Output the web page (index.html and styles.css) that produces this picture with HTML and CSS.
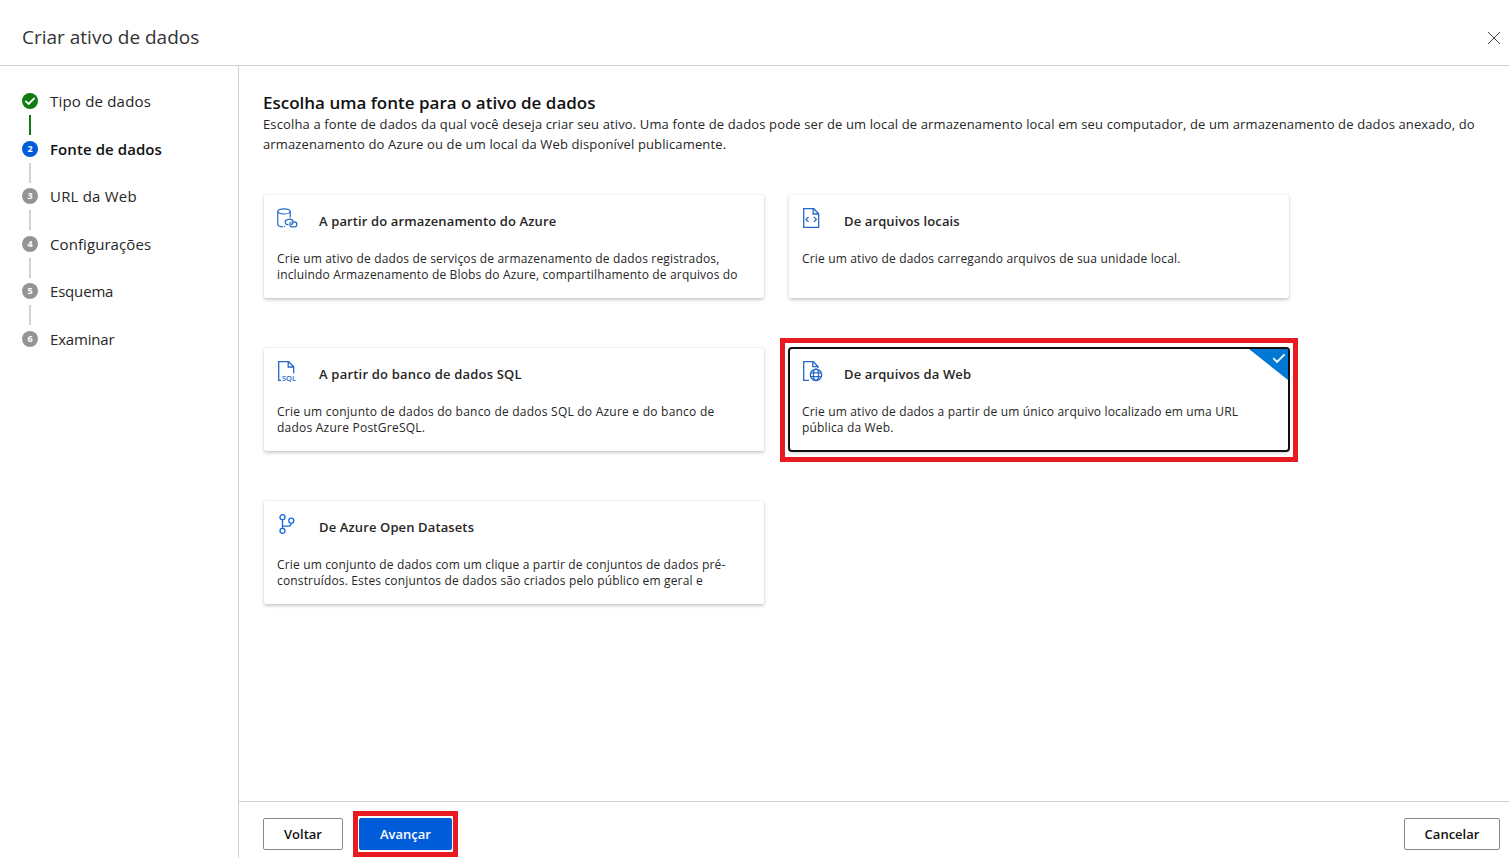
FILE: index.html
```html
<!DOCTYPE html>
<html lang="pt">
<head>
<meta charset="utf-8">
<title>Criar ativo de dados</title>
<link rel="stylesheet" href="styles.css">
</head>
<body>
<div class="app">
  <header class="header">
    <h1 class="title">Criar ativo de dados</h1>
    <button class="close" aria-label="Fechar"><svg width="14" height="14" viewBox="0 0 14 14"><path d="M1 1l12 12M13 1L1 13" stroke="#444" stroke-width="1" fill="none"/></svg></button>
  </header>
  <div class="body">
    <nav class="steps">
      <div class="step done"><span class="dot"><svg width="16" height="16" viewBox="0 0 16 16"><path d="M3.4 7.8l3.2 3.2 6-6" fill="none" stroke="#fff" stroke-width="1.8"/></svg></span><span class="label wide">Tipo de dados</span></div>
      <div class="step current"><span class="dot">2</span><span class="label">Fonte de dados</span></div>
      <div class="step"><span class="dot">3</span><span class="label wide">URL da Web</span></div>
      <div class="step"><span class="dot">4</span><span class="label">Configurações</span></div>
      <div class="step"><span class="dot">5</span><span class="label narrow">Esquema</span></div>
      <div class="step"><span class="dot">6</span><span class="label narrow">Examinar</span></div>
    </nav>
    <main class="main">
      <section class="content">
        <h2 class="heading">Escolha uma fonte para o ativo de dados</h2>
        <p class="intro">Escolha a fonte de dados da qual você deseja criar seu ativo. Uma fonte de dados pode ser de um local de armazenamento local em seu computador, de um armazenamento de dados anexado, do<br>armazenamento do Azure ou de um local da Web disponível publicamente.</p>
        <div class="cards">
          <article class="card">
            <div class="card-head">
              <svg class="icon" width="22" height="22" viewBox="0 0 22 22"><g fill="none" stroke="#2468c8" stroke-width="1.2"><ellipse cx="7" cy="3.4" rx="6.2" ry="2.6"/><path d="M.8 3.4v13.2c0 1.2 2.4 2.2 5.4 2.4M13.2 3.4v6.2M7.2 18.4h1"/><path d="M11.4 16.6h-.6a2.5 2.5 0 0 1-.2-5l2.3-.4c3.8-.2 4.2 4.6 1 5.4"/><path d="M16.4 13.9h1.2c3.2.5 3 4.8-.2 5h-2.4c-3-.5-3-4.4-.4-5.2"/></g></svg>
              <h3>A partir do armazenamento do Azure</h3>
            </div>
            <p>Crie um ativo de dados de serviços de armazenamento de dados registrados,<br>incluindo Armazenamento de Blobs do Azure, compartilhamento de arquivos do</p>
          </article>
          <article class="card">
            <div class="card-head">
              <svg class="icon" width="22" height="22" viewBox="0 0 22 22"><g fill="none" stroke="#2468c8" stroke-width="1.3"><path d="M1.7.7h10l5 5v13.6h-15zM11.2.7v5.3h5.5M6.5 8.9L4 11.4l2.5 2.5M11.9 8.9l2.5 2.5-2.5 2.5"/></g></svg>
              <h3>De arquivos locais</h3>
            </div>
            <p>Crie um ativo de dados carregando arquivos de sua unidade local.</p>
          </article>
          <article class="card loose">
            <div class="card-head">
              <svg class="icon" width="22" height="22" viewBox="0 0 22 22"><path d="M4 19.3H1.7V.7h10l5 5v6.5M11.2.7v5.3h5.5" fill="none" stroke="#2468c8" stroke-width="1.3"/><text x="5" y="19.6" class="sql" textLength="14">SQL</text></svg>
              <h3>A partir do banco de dados SQL</h3>
            </div>
            <p>Crie um conjunto de dados do banco de dados SQL do Azure e do banco de<br>dados Azure PostGreSQL.</p>
          </article>
          <article class="card selected">
            <div class="card-head">
              <svg class="icon" width="22" height="22" viewBox="0 0 22 22"><g fill="none" stroke="#2468c8" stroke-width="1.3"><path d="M7 19.3H1.7V.7h9.5l4.8 4.8V7M10.8.7v5h5.2"/><circle cx="14" cy="13.8" r="5.7"/><ellipse cx="14" cy="13.8" rx="2.6" ry="5.7"/><path d="M8.8 11.9h10.4M8.8 15.7h10.4"/></g></svg>
              <h3>De arquivos da Web</h3>
            </div>
            <p>Crie um ativo de dados a partir de um único arquivo localizado em uma URL<br>pública da Web.</p>
            <svg class="corner" width="39" height="31" viewBox="0 0 39 31"><path d="M0 0h39v31z" fill="#0078d4"/><path d="M24.3 9.2l3.7 3.8 7.6-7.6" fill="none" stroke="#fff" stroke-width="1.8"/></svg>
          </article>
          <article class="card">
            <div class="card-head">
              <svg class="icon" width="22" height="22" viewBox="0 0 22 22"><g fill="none" stroke="#1769e0" stroke-width="1.3"><circle cx="5.5" cy="3.2" r="2.5"/><circle cx="5.5" cy="16.8" r="2.5"/><circle cx="14.3" cy="6.7" r="2.5"/><path d="M5.5 5.7v8.6M5.5 12.2h5.8c1.8 0 2.8-1.2 3-3"/></g></svg>
              <h3>De Azure Open Datasets</h3>
            </div>
            <p>Crie um conjunto de dados com um clique a partir de conjuntos de dados pré-<br>construídos. Estes conjuntos de dados são criados pelo público em geral e</p>
          </article>
        </div>
      </section>
      <footer class="footer">
        <button class="btn back">Voltar</button>
        <span class="frame"><button class="btn primary">Avançar</button></span>
        <button class="btn cancel">Cancelar</button>
      </footer>
    </main>
  </div>
</div>
</body>
</html>
```
FILE: styles.css
```css
* { box-sizing: border-box; margin: 0; padding: 0; }
body { font-family: "Open Sans", "Noto Sans", sans-serif; color: #262626; background: #fff; overflow: hidden; }
button { font: inherit; }
.app { display: flex; flex-direction: column; height: 858px; }
.header { height: 66px; border-bottom: 1px solid #d2d2d2; display: flex; align-items: center; justify-content: space-between; padding: 9px 8px 0 22px; }
.title { font-size: 19px; font-weight: 400; line-height: 26px; color: #333; }
.close { border: 0; background: none; width: 14px; height: 14px; margin-top: 2px; }
.close svg { display: block; }
.body { flex: 1; display: flex; min-height: 0; }
.steps { width: 239px; border-right: 1px solid #d2d2d2; padding: 24px 0 0 22px; }
.step { display: flex; align-items: flex-start; gap: 12px; height: 47.6px; position: relative; }
.dot { width: 16px; height: 16px; margin-top: 3px; border-radius: 50%; background: #949494; color: #fff; font-size: 9px; font-weight: 700; line-height: 16px; text-align: center; }
.dot svg { display: block; }
.done .dot { background: #107c10; }
.current .dot { background: #015cda; }
.step:not(:last-child)::after { content: ""; position: absolute; left: 7px; top: 25px; width: 2px; height: 20px; background: #d2d2d2; }
.step.done::after { background: #107c10; }
.label { font-size: 15px; line-height: 22px; letter-spacing: 0.08px; white-space: nowrap; }
.wide { letter-spacing: 0.2px; }
.narrow { letter-spacing: -0.18px; }
.current .label { font-weight: 600; color: #111; }
.main { flex: 1; display: flex; flex-direction: column; min-width: 0; }
.content { flex: 1; padding: 25px 0 0 24px; }
.heading { font-size: 17px; line-height: 23px; font-weight: 600; color: #111; white-space: nowrap; }
.intro { font-size: 13px; line-height: 20px; letter-spacing: 0.133px; white-space: nowrap; }
.cards { display: grid; grid-template-columns: 500px 500px; grid-auto-rows: 103px; gap: 50px 25px; margin: 41px 0 0 1px; }
.card { position: relative; padding: 12px 13px; border-radius: 2px; background: #fff; box-shadow: 0 1.6px 3.6px rgba(0,0,0,.2), 0 0 1.5px rgba(0,0,0,.1); }
.card-head { display: flex; height: 44px; gap: 20px; }
.icon { flex: none; overflow: visible; margin-top: 1px; }
.card h3 { font-size: 13px; line-height: 18px; letter-spacing: 0.12px; font-weight: 600; margin-top: 5px; white-space: nowrap; }
.card p { font-size: 12px; line-height: 16px; letter-spacing: 0.16px; white-space: nowrap; }
.loose h3 { letter-spacing: 0.2px; }
.loose p { letter-spacing: 0.23px; }
.sql { font-size: 7.5px; font-weight: 600; fill: #2468c8; }
.selected { outline: 2px solid #111; outline-offset: -1px; border-radius: 3px; }
.selected::before { content: ""; position: absolute; inset: -10px -9px -11px; border: 5px solid #e81b23; }
.corner { position: absolute; right: 1px; top: 1px; }
.footer { height: 57px; border-top: 1px solid #d2d2d2; display: flex; align-items: flex-start; padding: 9px 9px 0 24px; }
.btn { height: 32px; border: 1px solid #8a8886; border-radius: 2px; background: #fff; font-size: 13px; font-weight: 600; line-height: 30px; color: #111; }
.back { width: 80px; margin: 7px 10px 0 0; }
.frame { width: 105px; height: 46px; border: 5px solid #e81b23; padding: 2px 1px; }
.primary { display: block; width: 93px; background: #015cda; border-color: #015cda; color: #fff; }
.cancel { width: 96px; margin: 7px 0 0 auto; }
```
